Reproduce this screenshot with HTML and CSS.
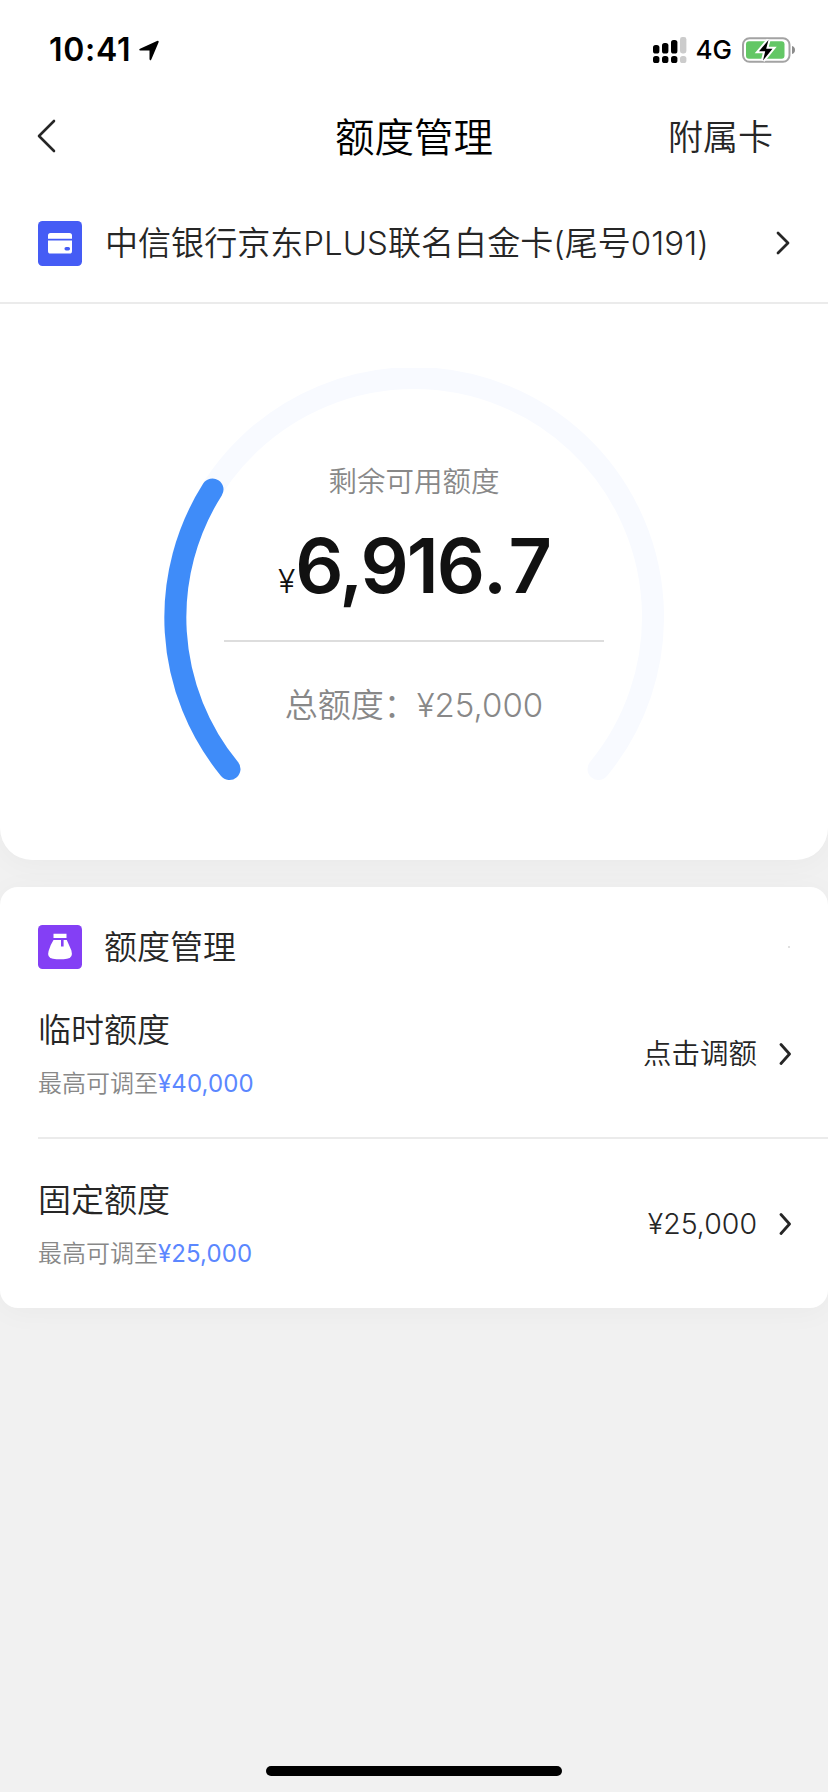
FILE: index.html
```html
<!DOCTYPE html>
<html lang="zh-CN">
<head>
<meta charset="utf-8">
<title>额度管理</title>
<link rel="stylesheet" href="styles.css">
</head>
<body>
<div class="screen">
  <section class="panel overview">
    <header class="status">
      <div class="status-left">
        <span class="clock">10:41</span>
        <svg class="loc" width="20" height="21" viewBox="0 0 20 21"><path d="M1 8.8 18 .9Q20.200 .3 19.500 2.400L12.300 19.600Q11.200 21.400 10.500 19.300V10.600L1.200 10.400Q-.6 9.800 1 8.800Z"/></svg>
      </div>
      <div class="status-right">
        <svg class="signal" width="34" height="27" viewBox="0 0 34 27">
          <g fill="#000"><rect x="0" y="8" width="6.4" height="8.5" rx="2.6"/><rect x="9" y="6" width="6.4" height="10.5" rx="2.6"/><rect x="18" y="3" width="6.4" height="13.5" rx="2.6"/><rect x="0" y="19" width="6.4" height="7" rx="2.6"/><rect x="9" y="19" width="6.4" height="7" rx="2.6"/><rect x="18" y="19" width="6.4" height="7" rx="2.6"/></g>
          <g fill="#ccc"><rect x="27" y="0" width="6.4" height="16.5" rx="2.4"/><rect x="27" y="19" width="6.4" height="7" rx="2.6"/></g>
        </svg>
        <span class="net">4G</span>
        <svg class="battery" width="54" height="28" viewBox="0 0 54 28">
          <rect x="1" y="2.2" width="46.5" height="23.6" rx="6.5" fill="none" stroke="#a3a3a3" stroke-width="2"/>
          <path d="M50 10q3 .8 3 4t-3 4z" fill="#8c8c8c"/>
          <rect x="4" y="5.2" width="38.5" height="17.6" rx="3" fill="#63c765"/>
          <path d="M26.5 4 17 15.3h6.2L21 24.5 30.500 12.800h-6.300Z" fill="#000" stroke="#fff" stroke-width="4" paint-order="stroke"/>
        </svg>
      </div>
    </header>
    <nav class="nav">
      <svg class="back" width="20" height="34" viewBox="0 0 20 34"><path d="M17 2 2 17 17 32"/></svg>
      <h1 class="title">额度管理</h1>
      <span class="nav-link">附属卡</span>
    </nav>
    <div class="account">
      <svg class="badge" width="44" height="45" viewBox="0 0 44 45">
        <rect width="44" height="45" rx="4.5" fill="#455cf5"/>
        <path d="M10 17.8V14.5Q10 12 12.5 12h19Q34 12 34 14.5v3.3zM10 19.4h24V30Q34 32.6 31.5 32.6h-19Q10 32.6 10 30z" fill="#fff"/>
        <rect x="26.5" y="26" width="5.5" height="3.4" rx="1.6" fill="#455cf5"/>
      </svg>
      <span class="account-name">中信银行京东PLUS联名白金卡(尾号0191)</span>
      <svg class="chev" width="14" height="24" viewBox="0 0 14 24"><path d="M2 2 12 12 2 22"/></svg>
    </div>
    <div class="gauge">
      <svg class="ring" width="500" height="430" viewBox="0 0 500 430">
        <path class="track" d="M65.5 401A239 239 0 1 1 434.5 401"/>
        <path class="value" d="M65.5 401A239 239 0 0 1 48.5 121.5"/>
      </svg>
      <div class="figures">
        <div class="label">剩余可用额度</div>
        <div class="amount"><span class="yen">¥</span>6,916<span class="point">.</span>7</div>
        <div class="total">总额度：<span class="total-num">¥25,000</span></div>
      </div>
    </div>
  </section>
  <section class="panel manage">
    <div class="manage-head">
      <svg class="badge" width="44" height="44" viewBox="0 0 44 44">
        <rect width="44" height="44" rx="4.5" fill="#843ff5"/>
        <path d="M15.5 8.8h13v4.200h-13zM15.500 15H23v6.500h2.600V15h3.200Q31 20 33.400 25.500 35.500 33 29 33.800 22 34.800 15 33.800 8.600 33 10.600 26 12.500 19.500 15.500 15z" fill="#fff"/>
      </svg>
      <h2 class="manage-title">额度管理</h2>
      <i class="speck"></i>
    </div>
    <div class="row">
      <div class="row-text"><div class="row-title">临时额度</div><div class="row-sub">最高可调至<b>¥40,000</b></div></div>
      <span class="action">点击调额</span>
      <svg class="chev" width="12" height="24" viewBox="0 0 12 24"><path d="M2 2.500 10.500 12 2 21.500"/></svg>
    </div>
    <div class="row">
      <div class="row-text"><div class="row-title">固定额度</div><div class="row-sub">最高可调至<b>¥25,000</b></div></div>
      <span class="action number">¥25,000</span>
      <svg class="chev" width="12" height="24" viewBox="0 0 12 24"><path d="M2 2.500 10.500 12 2 21.500"/></svg>
    </div>
  </section>
  <div class="home"></div>
</div>
</body>
</html>
```

FILE: styles.css
```css
* { box-sizing: border-box; margin: 0; padding: 0; }
body { background: #f1f1f1; font-family: Inter, "Noto Sans CJK SC", sans-serif; font-weight: 350; color: #262626; }
svg { display: block; flex: none; }
.screen { width: 828px; height: 1792px; display: flex; flex-direction: column; overflow: hidden; background: #f1f1f1; }
.panel { background: #fff; box-shadow: 0 4px 30px rgba(0, 0, 0, .035); }
.overview { height: 860px; border-radius: 0 0 32px 32px; }

.status { height: 100px; display: flex; justify-content: space-between; align-items: center; padding: 0 32px 0 49px; color: #000; }
.status-left, .status-right { display: flex; align-items: center; }
.clock { font-size: 32px; font-weight: 570; line-height: 40px; letter-spacing: .7px; }
.loc { margin-left: 8px; }
.net { font-size: 26px; font-weight: 450; line-height: 32px; margin: 0 10px 0 9px; }

.nav { height: 72px; display: grid; grid-template-columns: 1fr auto 1fr; align-items: center; padding: 0 37px; }
.back path { fill: none; stroke: #262626; stroke-width: 2.6; stroke-linecap: round; stroke-linejoin: round; }
.title { font-size: 39.5px; font-weight: 350; line-height: 56px; margin-top: 3px; color: #000; }
.nav-link { justify-self: end; margin: 2px 18px 0 0; font-size: 35px; line-height: 50px; }

.account { height: 132px; display: flex; align-items: center; padding: 12px 38px 0 38px; border-bottom: 2px solid #ebebeb; }
.account-name { flex: 1; margin-left: 23px; font-size: 33px; line-height: 48px; letter-spacing: .05px; white-space: nowrap; }
.chev path { fill: none; stroke: #262626; stroke-width: 2.8; stroke-linecap: round; stroke-linejoin: round; }

.gauge { width: 500px; height: 430px; margin: 64px auto 0; display: grid; }
.ring, .figures { grid-area: 1 / 1; }
.ring path { fill: none; stroke-width: 22; stroke-linecap: round; }
.track { stroke: #f8faff; }
.value { stroke: #3f8cf9; }
.figures { z-index: 1; display: flex; flex-direction: column; align-items: center; padding-top: 92px; }
.label { font-size: 28.5px; line-height: 44px; color: #888; }
.amount { width: 380px; height: 138px; padding-top: 14px; text-align: center; border-bottom: 2px solid #ddd; font-size: 75.5px; font-weight: 560; line-height: 96px; letter-spacing: -2px; color: #111; }
.yen { font-size: 32px; font-weight: 350; letter-spacing: 0; }
.point { letter-spacing: 1.5px; }
.total { margin-top: 39px; font-size: 33px; line-height: 48px; color: #888; white-space: nowrap; }

.manage { margin-top: 27px; height: 421px; border-radius: 18px; padding: 38px 0 0 38px; }
.manage-head { display: flex; align-items: center; height: 44px; padding-right: 38px; }
.manage-title { flex: 1; margin-left: 22px; font-size: 33px; font-weight: 350; line-height: 48px; }
.speck { width: 2px; height: 2px; background: #e0e0e0; }
.row { display: flex; align-items: center; padding: 2px 37px 0 0; height: 168px; }
.row + .row { height: 171px; padding-top: 0; border-top: 2px solid #ebebeb; }
.row-text { flex: 1; }
.row-title { font-size: 33px; line-height: 48px; }
.row-sub { margin-top: 12px; font-size: 24px; line-height: 36px; color: #888; }
.row-sub b { font-weight: 400; letter-spacing: .1px; color: #5b87ff; }
.action { font-size: 28.5px; line-height: 40px; margin-right: 22px; }

.home { width: 296px; height: 10px; border-radius: 5px; background: #000; margin: auto auto 16px; }
```
